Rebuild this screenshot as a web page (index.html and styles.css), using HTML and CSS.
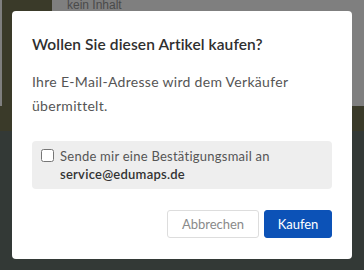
FILE: index.html
```html
<!DOCTYPE html>
<html lang="de">
<head>
    <meta charset="UTF-8">
    <meta name="viewport" content="width=device-width, initial-scale=1.0">
    <title>Artikel kaufen</title>
    <link rel="stylesheet" href="styles.css">
</head>
<body>
    <div class="page">
        <div class="page-top">
            <div class="edge"></div>
            <div class="sidebar"></div>
            <div class="content">kein Inhalt</div>
        </div>
        <div class="band"></div>
    </div>

    <div class="overlay">
        <div class="modal">
            <h2 class="modal-title">Wollen Sie diesen Artikel kaufen?</h2>
            <p class="modal-text">Ihre E-Mail-Adresse wird dem Verkäufer übermittelt.</p>

            <label class="confirm-box">
                <input type="checkbox" id="confirmMail">
                <span class="confirm-text">Sende mir eine Bestätigungsmail an<br><strong>service@edumaps.de</strong></span>
            </label>

            <div class="modal-actions">
                <button type="button" class="btn btn-cancel">Abbrechen</button>
                <button type="button" class="btn btn-primary">Kaufen</button>
            </div>
        </div>
    </div>
</body>
</html>
```

FILE: styles.css
```css
body {
    margin: 0;
    font-family: "Lato", "Open Sans", sans-serif;
    background-color: #333936;
    height: 270px;
    overflow: hidden;
}

/* Hintergrund (abgedunkelt) */
.page-top {
    display: flex;
    height: 106px;
    background-color: #7f7f7f;
}

.edge {
    width: 2px;
}

.sidebar {
    width: 50px;
    background-color: #3a3a29;
}

.content {
    padding-left: 15px;
    font-family: "Liberation Sans", Arial, sans-serif;
    font-size: 12px;
    line-height: 11px;
    color: #4a4a4a;
}

.band {
    height: 25px;
    background-color: #3a3a29;
}

/* Dialog */
.overlay {
    position: fixed;
    top: 0;
    left: 0;
    width: 100%;
    height: 100%;
    display: flex;
    justify-content: center;
    align-items: flex-start;
}

.modal {
    background-color: #ffffff;
    width: 340px;
    margin-top: 11px;
    padding: 22px 20px 21px;
    box-sizing: border-box;
    border-radius: 4px;
}

.modal-title {
    margin: 0;
    font-size: 15.5px;
    line-height: 22px;
    font-weight: 600;
    letter-spacing: 0.1px;
    color: #2f2f2f;
}

.modal-text {
    margin: 15px 0 0;
    font-size: 14px;
    line-height: 24px;
    letter-spacing: 0.3px;
    color: #555555;
}

.confirm-box {
    display: flex;
    align-items: flex-start;
    gap: 6px;
    margin-top: 23px;
    padding: 6px 9px 6px;
    background-color: #eeeeee;
    border-radius: 4px;
    font-size: 13px;
    line-height: 18px;
    letter-spacing: 0.25px;
    color: #555555;
}

.confirm-box input {
    margin: 2px 0 0;
    width: 13px;
    height: 13px;
}

.confirm-text strong {
    color: #333333;
    font-weight: 600;
}

.modal-actions {
    display: flex;
    justify-content: flex-end;
    gap: 5px;
    margin-top: 21px;
}

.btn {
    font-family: inherit;
    font-size: 13px;
    height: 28px;
    border-radius: 3px;
    cursor: pointer;
}

.btn-cancel {
    width: 92px;
    background-color: #ffffff;
    border: 1px solid #dddddd;
    color: #8a8a8a;
}

.btn-primary {
    width: 68px;
    background-color: #0c52b7;
    border: 1px solid #0c52b7;
    color: #ffffff;
}
```
